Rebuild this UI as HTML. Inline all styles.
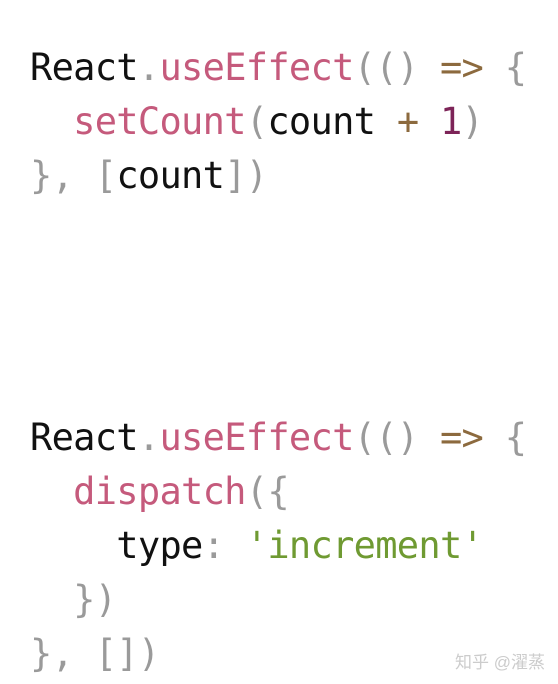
<!DOCTYPE html>
<html><head><meta charset="utf-8"><style>
html,body{margin:0;padding:0;background:#fff;width:558px;height:684px;overflow:hidden;position:relative}
.l{position:absolute;left:30px;font-family:"DejaVu Sans Mono","Liberation Mono",monospace;font-size:37px;letter-spacing:-0.7px;line-height:54px;white-space:pre;color:#111}
.p{color:#c55a7c}.g{color:#9a9a9a}.b{color:#8c6a3e}.n{color:#7d2458}.s{color:#6f9a32}
.wm{position:absolute;left:455px;top:648px;font-family:"Liberation Sans","Noto Sans CJK SC",sans-serif;font-size:17px;color:#cccccc}
</style></head><body>
<div class="l" style="top:41px">React<span class="g">.</span><span class="p">useEffect</span><span class="g">(()</span> <span class="b">=&gt;</span> <span class="g">{</span></div>
<div class="l" style="top:95px">  <span class="p">setCount</span><span class="g">(</span>count <span class="b">+</span> <span class="n">1</span><span class="g">)</span></div>
<div class="l" style="top:149px"><span class="g">}, [</span>count<span class="g">])</span></div>
<div class="l" style="top:411px">React<span class="g">.</span><span class="p">useEffect</span><span class="g">(()</span> <span class="b">=&gt;</span> <span class="g">{</span></div>
<div class="l" style="top:465px">  <span class="p">dispatch</span><span class="g">({</span></div>
<div class="l" style="top:519px">    type<span class="g">:</span> <span class="s">'increment'</span></div>
<div class="l" style="top:573px">  <span class="g">})</span></div>
<div class="l" style="top:627px"><span class="g">}, [])</span></div>
<div class="wm">知乎 @濯蒸</div>
</body></html>
